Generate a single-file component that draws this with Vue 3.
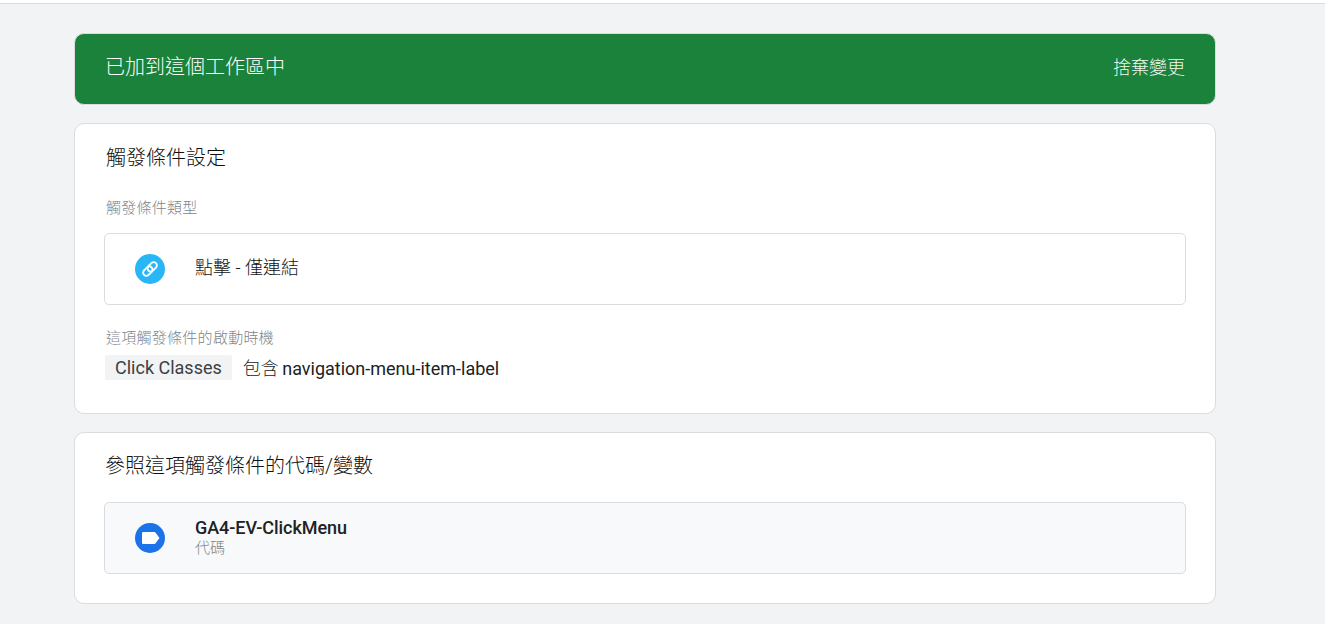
<script setup>
</script>

<template>
  <div class="page">
    <div class="topbar"></div>
    <main class="content">
      <section class="banner">
        <span class="banner-title">已加到這個工作區中</span>
        <span class="banner-action">捨棄變更</span>
      </section>

      <section class="card settings">
        <h2 class="card-title">觸發條件設定</h2>
        <div class="label type-label">觸發條件類型</div>
        <div class="row type-row">
          <span class="icon-slot">
            <svg width="30" height="30" viewBox="0 0 30 30">
              <circle cx="15" cy="15" r="15" fill="#29b6f6" />
              <g fill="none" stroke="#fff" stroke-width="1.9" transform="rotate(-45 15 15)">
                <rect x="6.6" y="11.800" width="10.600" height="6.400" rx="3.200" />
                <rect x="12.800" y="11.800" width="10.600" height="6.400" rx="3.200" />
              </g>
            </svg>
          </span>
          <span class="type-name">點擊 - 僅連結</span>
        </div>
        <div class="label fire-label">這項觸發條件的啟動時機</div>
        <div class="condition">
          <span class="chip">Click Classes</span>
          <span class="condition-text"><span class="operator">包含</span> navigation-menu-item-label</span>
        </div>
      </section>

      <section class="card refs">
        <h2 class="card-title refs-title">參照這項觸發條件的代碼/變數</h2>
        <div class="row ref-row">
          <span class="icon-slot">
            <svg width="30" height="30" viewBox="0 0 30 30">
              <circle cx="15" cy="15" r="15" fill="#1a73e8" />
              <path d="M7 10.200a1.200 1.200 0 0 1 1.200-1.200h11.300a1.200 1.200 0 0 1 .9.400l4.100 5.600-4.100 5.600a1.200 1.200 0 0 1-.9.400h-11.300a1.200 1.200 0 0 1-1.200-1.200z" fill="#fff" />
            </svg>
          </span>
          <span class="ref-text">
            <span class="ref-name">GA4-EV-ClickMenu</span>
            <span class="ref-kind">代碼</span>
          </span>
        </div>
      </section>
    </main>
  </div>
</template>

<style>
html, body {
  margin: 0;
  background: #f1f3f5;
}
</style>

<style scoped>
.page {
  height: 624px;
  overflow: hidden;
  background: #f1f3f5;
  font-family: Roboto, "Noto Sans CJK TC", sans-serif;
  color: #202124;
}
.topbar {
  height: 3px;
  background: #fff;
  border-bottom: 1px solid #dadce0;
}
.content {
  width: 1142px;
  margin-left: 74px;
  padding-top: 29px;
  display: flex;
  flex-direction: column;
}
.banner {
  box-sizing: border-box;
  height: 72px;
  padding: 0 30px 8px 30px;
  display: flex;
  align-items: center;
  justify-content: space-between;
  background: #1a823b;
  border: 1px solid #dadce0;
  border-radius: 10px;
  color: #fff;
}
.banner-title {
  font-size: 20px;
  font-weight: 300;
}
.banner-action {
  font-size: 18px;
  font-weight: 300;
  color: #f4faf5;
  position: relative;
  top: 1px;
}
.card {
  box-sizing: border-box;
  background: #fff;
  border: 1px solid #dadce0;
  border-radius: 10px;
  padding: 0 29px;
}
.settings {
  height: 291px;
  margin-top: 18px;
}
.refs {
  height: 172px;
  margin-top: 18px;
}
.card-title {
  margin: 0 0 0 2px;
  font-size: 20px;
  font-weight: 300;
  line-height: 28px;
  padding-top: 20px;
  color: #111;
}
.refs-title {
  margin-left: 1px;
  padding-top: 19px;
}
.label {
  margin-left: 2px;
  font-size: 15px;
  font-weight: 300;
  line-height: 20px;
  letter-spacing: 0.27px;
  color: #80868b;
}
.type-label {
  margin-top: 26px;
}
.row {
  box-sizing: border-box;
  height: 72px;
  display: flex;
  align-items: center;
  border: 1px solid #dadce0;
  border-radius: 5px;
}
.type-row {
  margin-top: 15px;
  background: #fff;
}
.icon-slot {
  width: 30px;
  height: 30px;
  margin-left: 30px;
  flex: none;
  display: flex;
}
.type-name {
  margin-left: 30px;
  margin-bottom: 7px;
  font-size: 18px;
  font-weight: 300;
  color: #111;
}
.fire-label {
  margin-top: 23px;
}
.condition {
  margin-top: 6px;
  margin-left: 1px;
  display: flex;
  align-items: center;
}
.chip {
  box-sizing: border-box;
  height: 25px;
  padding: 0 10px;
  display: flex;
  align-items: center;
  background: #f1f3f4;
  border-radius: 2px;
  font-size: 18px;
  color: #3c4043;
}
.condition-text {
  margin-left: 11px;
  font-size: 18px;
}
.operator {
  font-weight: 300;
  margin-right: -1px;
}
.ref-row {
  margin-top: 22px;
  background: #f8f9fa;
}
.ref-text {
  margin-left: 30px;
  margin-top: -3px;
  display: flex;
  flex-direction: column;
}
.ref-name {
  font-size: 18px;
  font-weight: 500;
  line-height: 21px;
  letter-spacing: -0.06px;
}
.ref-kind {
  font-size: 15px;
  font-weight: 300;
  line-height: 16px;
  margin-top: 2px;
  color: #80868b;
}
</style>
